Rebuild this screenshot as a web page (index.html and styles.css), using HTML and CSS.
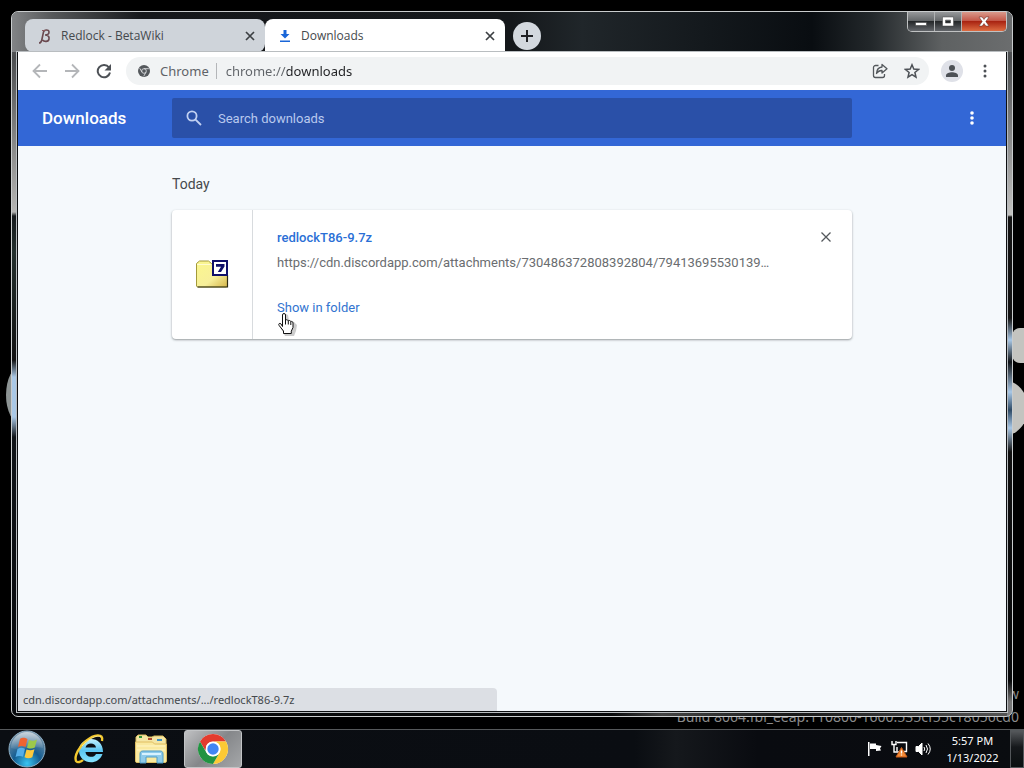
FILE: index.html
```html
<!DOCTYPE html>
<html lang="en">
<head>
    <meta charset="UTF-8">
    <meta name="viewport" content="width=device-width, initial-scale=1.0">
    <title>Downloads</title>
    <link rel="stylesheet" href="styles.css">
</head>
<body>
    <div class="desktop">
        <div class="blob blob-left"></div>
        <div class="blob blob-right-top"></div>
        <div class="blob blob-right-bottom"></div>
        <div class="watermark">
            <div>Windows Developer Preview</div>
            <div>Build 8064.fbl_eeap.110800-1600.535cf55c18056cd0</div>
        </div>

        <div class="window">
            <header class="titlebar">
                <div class="tabs">
                    <div class="tab">
                        <svg class="tab-icon" width="16" height="16" viewBox="0 0 16 16" fill="none" stroke="#6b4a50" stroke-width="1.6">
                            <path d="M2 15c2 0 2.500-1 3-4L6.500 4C7 1.500 12 1 12 4c0 2-2 3-4 3 3 0 4.500 1.500 4 4-.5 3-5 3-6.500 1"/>
                            <path d="M5 2.500h4" stroke="#8a5a60" stroke-width="1"/>
                        </svg>
                        <span class="tab-title">Redlock - BetaWiki</span>
                        <button class="tab-close" aria-label="Close tab">
                            <svg width="10" height="10" viewBox="0 0 10 10" stroke="#3c4043" stroke-width="1.7"><path d="M1 1l8 8M9 1L1 9"/></svg>
                        </button>
                    </div>
                    <div class="tab active">
                        <svg class="tab-icon" width="16" height="16" viewBox="0 0 16 16" fill="#1a66d8">
                            <path d="M6.500 2h3v4h3L8 10.500 3.500 6h3z"/>
                            <path d="M3 12.500h10V14H3z"/>
                        </svg>
                        <span class="tab-title">Downloads</span>
                        <button class="tab-close" aria-label="Close tab">
                            <svg width="10" height="10" viewBox="0 0 10 10" stroke="#3c4043" stroke-width="1.7"><path d="M1 1l8 8M9 1L1 9"/></svg>
                        </button>
                    </div>
                </div>
                <button class="new-tab" aria-label="New tab">
                    <svg width="12" height="12" viewBox="0 0 12 12" stroke="#202124" stroke-width="2"><path d="M6 0v12M0 6h12"/></svg>
                </button>
                <div class="captions">
                    <button class="caption" aria-label="Minimize">
                        <svg width="14" height="12" viewBox="0 0 14 12"><rect x="1.500" y="6.500" width="11" height="3" fill="#fff" stroke="#444" stroke-width=".6"/></svg>
                    </button>
                    <button class="caption" aria-label="Maximize">
                        <svg width="14" height="12" viewBox="0 0 14 12"><path d="M1.500 1h11v9h-11zM4.500 4v3h5V4z" fill="#fff" fill-rule="evenodd" stroke="#444" stroke-width=".5"/></svg>
                    </button>
                    <button class="caption close" aria-label="Close">
                        <svg width="14" height="12" viewBox="0 0 14 12"><path d="M2 1h3.200L7 3.500 8.800 1H12L8.800 5.500 12 10H8.800L7 7.500 5.200 10H2l3.200-4.500z" fill="#fff" stroke="#5a2520" stroke-width=".5"/></svg>
                    </button>
                </div>
            </header>

            <div class="client">
                <nav class="toolbar">
                    <button class="nav-btn" aria-label="Back">
                        <svg width="16" height="16" viewBox="0 0 16 16" fill="none" stroke="#b4b6b9" stroke-width="1.8"><path d="M15 8H2M8 1.500L1.500 8 8 14.500"/></svg>
                    </button>
                    <button class="nav-btn" aria-label="Forward">
                        <svg width="16" height="16" viewBox="0 0 16 16" fill="none" stroke="#b4b6b9" stroke-width="1.8"><path d="M1 8h13M8 1.500L14.500 8 8 14.500"/></svg>
                    </button>
                    <button class="nav-btn" aria-label="Reload">
                        <svg width="16" height="16" viewBox="0 0 16 16"><path d="M13 4.500A6.200 6.200 0 1 0 14 9.500" fill="none" stroke="#4d5156" stroke-width="2"/><path d="M15 1v6.500H8.500z" fill="#4d5156"/></svg>
                    </button>
                    <div class="omnibox">
                        <svg width="12" height="12" viewBox="0 0 14 14">
                            <circle cx="7" cy="7" r="7" fill="#54585c"/>
                            <circle cx="7" cy="7" r="2.700" fill="#54585c" stroke="#dfe1e4" stroke-width="1"/>
                            <path d="M7 4.300h5.600M4.700 8.400L2 3.800M9.300 8.400l-2.600 4.700" stroke="#dfe1e4" stroke-width="1"/>
                        </svg>
                        <span class="scheme">Chrome</span>
                        <input class="address" type="text" value="chrome://downloads" aria-label="Address">
                        <button class="omni-btn" aria-label="Share">
                            <svg width="16" height="16" viewBox="0 0 16 16" fill="none" stroke="#54585c" stroke-width="1.300" stroke-linejoin="round"><path d="M6.500 2.500H3.500a2 2 0 0 0-2 2v8a2 2 0 0 0 2 2h7a2 2 0 0 0 2-2V11"/><path d="M10 1.500L15 5.700 10 10V7.500C7.500 7.300 6 8.300 4.500 10.500 4.700 7 6.500 4.300 10 4z"/></svg>
                        </button>
                        <button class="omni-btn" aria-label="Bookmark">
                            <svg width="16" height="16" viewBox="0 0 16 16" fill="none" stroke="#4d5156" stroke-width="1.500"><path d="M8 1.800l1.800 4.300 4.700.4-3.600 3 1.100 4.600L8 11.700l-4 2.400 1.100-4.600-3.600-3 4.700-.4z"/></svg>
                        </button>
                    </div>
                    <button class="avatar" aria-label="Profile">
                        <svg width="14" height="14" viewBox="0 0 14 14" fill="#4d5156"><circle cx="7" cy="4" r="3"/><path d="M1 13v-1.500C1 9 4.500 8.200 7 8.200s6 .8 6 3.300V13z"/></svg>
                    </button>
                    <button class="menu-btn" aria-label="Chrome menu">
                        <svg width="4" height="14" viewBox="0 0 4 14" fill="#4d5156"><circle cx="2" cy="2" r="1.500"/><circle cx="2" cy="7" r="1.500"/><circle cx="2" cy="12" r="1.500"/></svg>
                    </button>
                </nav>

                <div class="page-header">
                    <h1>Downloads</h1>
                    <label class="search">
                        <svg width="16" height="16" viewBox="0 0 16 16" fill="none" stroke="#c2d1f2" stroke-width="1.800"><circle cx="6" cy="6" r="4.600"/><path d="M9.300 9.300l5.700 5.700"/></svg>
                        <input type="text" placeholder="Search downloads" aria-label="Search downloads">
                    </label>
                    <button class="more" aria-label="More actions">
                        <svg width="4" height="16" viewBox="0 0 4 16" fill="#fff"><circle cx="2" cy="3" r="1.800"/><circle cx="2" cy="8" r="1.800"/><circle cx="2" cy="13" r="1.800"/></svg>
                    </button>
                </div>

                <main class="downloads">
                    <h2>Today</h2>
                    <div class="card">
                        <div class="file-icon">
                            <svg width="34" height="30" viewBox="0 0 34 30">
                                <defs>
                                    <linearGradient id="folder" x1="0" y1="0" x2="1" y2="1">
                                        <stop offset="0" stop-color="#fbf78e"/>
                                        <stop offset=".6" stop-color="#f7ef9a"/>
                                        <stop offset="1" stop-color="#d5b54a"/>
                                    </linearGradient>
                                </defs>
                                <path d="M1.500 26V3.500l3-2.500h9l3 2.500h16V26l-1 1h-29z" fill="url(#folder)" stroke="#a39a3a"/>
                                <path d="M2.500 27h30V15" fill="none" stroke="#2d2a10" stroke-width="1.200"/>
                                <path d="M2 4.500h14" stroke="#fffcd0"/>
                                <rect x="18" y="1" width="14" height="14" fill="#fff" stroke="#10106a" stroke-width="2"/>
                                <path d="M21 4h8.500v2.500L26 12h-3.200L26 6.700h-5z" fill="#10106a"/>
                            </svg>
                        </div>
                        <div class="file-info">
                            <div class="file-row">
                                <a class="file-name" href="#">redlockT86-9.7z</a>
                                <button class="remove" aria-label="Remove from list">
                                    <svg width="10" height="10" viewBox="0 0 10 10" stroke="#54585c" stroke-width="1.300"><path d="M.5.5l9 9M9.500.5l-9 9"/></svg>
                                </button>
                            </div>
                            <div class="file-url">https://cdn.discordapp.com/attachments/730486372808392804/79413695530139…</div>
                            <div class="file-actions">
                                <a href="#">Show in folder</a>
                                <svg class="cursor" width="20" height="24" viewBox="0 0 20 24">
                                    <path d="M8 24l-2-4-4-6 2-1 3 1V3l2-1 2 1 1 5 5 2 3 3-1 6-2 5z" fill="#000" opacity=".2"/>
                                    <path d="M5.500 14.500V3a1.500 1.500 0 0 1 3 0v5.200c.5-.7 2.300-.7 2.700.6.700-.7 2.300-.4 2.500.8.900-.5 2.300 0 2.300 1.400v4.500l-1.700 3.700V21.500H6.500V19L2 13.300c-.9-1.300.6-2.600 1.900-1.500z" fill="#fff" stroke="#111"/>
                                    <path d="M8.500 8v4.500M11.300 9v3.500M13.800 10v3" stroke="#111"/>
                                </svg>
                            </div>
                        </div>
                    </div>
                </main>
                <div class="status">cdn.discordapp.com/attachments/.../redlockT86-9.7z</div>
            </div>
        </div>
    </div>

    <footer class="taskbar">
        <button class="start" aria-label="Start">
            <svg width="38" height="38" viewBox="0 0 38 38">
                <defs>
                    <radialGradient id="orb" cx=".5" cy=".9" r=".85">
                        <stop offset="0" stop-color="#39c5f2"/>
                        <stop offset=".45" stop-color="#155d91"/>
                        <stop offset="1" stop-color="#7893a8"/>
                    </radialGradient>
                    <linearGradient id="gloss" x1="0" y1="0" x2="0" y2="1">
                        <stop offset="0" stop-color="#fff" stop-opacity=".6"/>
                        <stop offset="1" stop-color="#fff" stop-opacity=".05"/>
                    </linearGradient>
                </defs>
                <circle cx="19" cy="19" r="18" fill="url(#orb)" stroke="#8fb0c6"/>
                <path d="M3 18a16 16 0 0 1 32 0c-10-3-22 4-32 0z" fill="url(#gloss)"/>
                <path d="M12 9c3-2 5-1 7.500 0l-2 8c-3-1.500-5-1.500-7.500 0z" fill="#ee6331"/>
                <path d="M21 10c3 1.200 5 1 8-.5l-2.200 8c-2.800 1.500-5 1.300-7.800.2z" fill="#9cc94b"/>
                <path d="M9.500 19c2.500-1.500 4.700-1.500 7.500-.3l-2 8c-3-1.200-5-1-7.500.3z" fill="#55aee8"/>
                <path d="M18.500 19.500c3 1.200 5 1 8-.3l-2.200 8c-2.800 1.300-5 1.200-7.800 0z" fill="#fcc93d"/>
            </svg>
        </button>
        <button class="task" aria-label="Internet Explorer">
            <svg width="32" height="32" viewBox="0 0 32 32" fill="none">
                <defs>
                    <linearGradient id="ie" x1="0" y1="0" x2="0" y2="1">
                        <stop offset="0" stop-color="#c2f1ff"/>
                        <stop offset=".5" stop-color="#5bc6f2"/>
                        <stop offset="1" stop-color="#87e4ff"/>
                    </linearGradient>
                </defs>
                <path d="M30 19H12.500c.3 5.500 8.500 6.500 10.500 2h6.500C25 34 5.500 31 6 17 6.500 3 30 1 30 19zm-7-4.500c-.5-5.500-9.500-5.500-10.500 0z" fill="url(#ie)" fill-rule="evenodd"/>
                <path d="M29 8C31 0 21 1 13 8 6 14 1 23 3 28c1 2 5 1 7-1" stroke="#f4c92f" stroke-width="2.400"/>
                <path d="M28 4C24 1 14 7 9 13" stroke="#fff0a0" stroke-width=".8"/>
            </svg>
        </button>
        <button class="task" aria-label="Windows Explorer">
            <svg width="34" height="32" viewBox="0 0 34 32">
                <path d="M2 4l2-2h8l2 2h4l2-1h9l3 3v8H2z" fill="#f5e6a4" stroke="#d9bb5e"/>
                <path d="M5 4h3" stroke="#31933b" stroke-width="2"/>
                <path d="M14 6h4" stroke="#b14a30" stroke-width="2"/>
                <path d="M23 7h5" stroke="#3e91c6" stroke-width="2"/>
                <path d="M1.500 9h17l2 2h12v17c0 1-.5 1.500-1.500 1.500H3c-1 0-1.500-.5-1.500-1.500z" fill="#fae99f" stroke="#e0bf62"/>
                <path d="M3 13h28M3 17h28" stroke="#fff6c8"/>
                <path d="M6 30V21c0-2 1-3 3-3h17c2 0 3 1 3 3v9h-6v-6H12v6z" fill="#8fcbea" stroke="#4d9bc8"/>
                <path d="M8 21h19" stroke="#d8f2ff" stroke-width="2"/>
            </svg>
        </button>
        <button class="task running" aria-label="Google Chrome">
            <svg width="32" height="32" viewBox="0 0 32 32">
                <circle cx="16" cy="16" r="15" fill="#fff"/>
                <path d="M3 8.500A15 15 0 0 1 29 8.500H16a7.500 7.500 0 0 0-6.500 3.800l-1 5.500z" fill="#e33b2e"/>
                <path d="M29 8.500A15 15 0 0 1 16 31l6.500-11.200A7.500 7.500 0 0 0 16 8.500z" fill="#fcc934"/>
                <path d="M16 31A15 15 0 0 1 3 8.500l6.500 11.300A7.500 7.500 0 0 0 22.500 19.800z" fill="#229342"/>
                <circle cx="16" cy="16" r="7.300" fill="#fff"/>
                <circle cx="16" cy="16" r="5.700" fill="#4285f4"/>
            </svg>
        </button>
        <div class="tray">
            <svg width="16" height="16" viewBox="0 0 16 16" fill="#fff"><path d="M1 1h1.500v14H1z"/><path d="M3 2.500h6v1.500l5.500 1L13 7.500l1 2-5 .5V8H3z"/></svg>
            <svg width="18" height="18" viewBox="0 0 18 18" fill="none" stroke="#fff">
                <path d="M2 1v3.500h4V1M4 4.500V12h5" stroke-width="1.400"/>
                <path d="M7 2.500h9.500v9H14M7 7v4.500" stroke-width="1.400"/>
                <path d="M11.500 7.500l5.500 9.500H6z" fill="#f38a35" stroke="#c85b19"/>
                <path d="M11.500 10.500v3M11.500 14.500v1" stroke-width="1.300"/>
            </svg>
            <svg width="16" height="16" viewBox="0 0 16 16" fill="none" stroke="#fff"><path d="M1 5.500h2.500L7 2v12l-3.500-3.500H1z" fill="#fff"/><path d="M9 6q1.500 2 0 4M11 4q3 4 0 8M13 2.500q4.500 5.500 0 11"/></svg>
        </div>
        <div class="clock">
            <div>5:57 PM</div>
            <div>1/13/2022</div>
        </div>
        <button class="show-desktop" aria-label="Show desktop"></button>
    </footer>
</body>
</html>
```
FILE: styles.css
```css
* {
    box-sizing: border-box;
}
body {
    margin: 0;
    display: flex;
    flex-direction: column;
    height: 100vh;
    background: #000;
    font-family: "Noto Sans", "Open Sans", sans-serif;
    font-size: 11px;
    overflow: hidden;
}
button {
    display: flex;
    align-items: center;
    justify-content: center;
    padding: 0;
    border: 0;
    background: none;
}
input {
    min-width: 0;
    padding: 0;
    border: 0;
    outline: 0;
    background: none;
}
svg {
    display: block;
    flex-shrink: 0;
}

/* desktop */
.desktop {
    position: relative;
    flex: 1;
    min-height: 0;
    display: flex;
    padding: 11px 11px 12px;
    overflow: hidden;
}
.blob {
    position: absolute;
    background: #c4c4c0;
}
.blob-left {
    left: 6px;
    top: 366px;
    width: 30px;
    height: 58px;
    border-radius: 50%;
    background: #8d9494;
}
.blob-right-top {
    right: -10px;
    top: 328px;
    width: 22px;
    height: 35px;
    border-radius: 8px;
}
.blob-right-bottom {
    right: -4px;
    top: 380px;
    width: 50px;
    height: 56px;
    border-radius: 50%;
}
.watermark {
    position: absolute;
    right: 5px;
    bottom: 1px;
    color: #8b8b8b;
    font-size: 14px;
    line-height: 23px;
    text-align: right;
    white-space: nowrap;
}

/* window with glass frame */
.window {
    position: relative;
    flex: 1;
    min-width: 0;
    display: flex;
    flex-direction: column;
    border: 1px solid #c9cccd;
    border-radius: 7px;
    overflow: hidden;
    background:
        linear-gradient(#75777a 0, #4c4e50 45px, #b5b5b3 200px, #161a1c 204px, #24302e 240px, #111 348px, #a9c8e6 365px, #a9c8e6 405px, #101418 425px, #05070a 100%) left / 5px 100% no-repeat,
        linear-gradient(#65676a 0, #4c4e50 45px, #c2c2c0 203px, #141414 205px, #141414 306px, #a9c8e6 328px, #101418 350px, #a9c8e6 380px, #2d4964 398px, #a9c8e6 416px, #111 440px, #08090a 95%, #777 98%) right / 5px 100% no-repeat,
        linear-gradient(90deg, #08090a 60%, #444 65%, #171717 78%, #555) bottom / 100% 5px no-repeat,
        #111416;
}
.titlebar {
    display: flex;
    height: 40px;
    padding: 0 5px 0 13px;
    background: linear-gradient(90deg, #828486 0, #56585a 40px, #16181b 130px, #14171a 500px, #20262a 570px, #090d11 800px, #23282b 860px, #5e6162 930px, #6b6d6e 100%);
}
.tabs {
    display: flex;
    align-self: flex-end;
}
.tab {
    display: flex;
    align-items: center;
    gap: 8px;
    width: 240px;
    height: 33px;
    padding: 0 10px 0 12px;
    border-radius: 8px;
    background: #cfd4da;
    color: #45494d;
    font-family: "Open Sans", sans-serif;
    font-size: 12px;
}
.tab.active {
    border-radius: 8px 8px 0 0;
    background: #fff;
}
.tab-title {
    flex: 1;
}
.tab-close {
    width: 10px;
    height: 16px;
}
.new-tab {
    width: 28px;
    height: 28px;
    margin: 10px 0 0 8px;
    border-radius: 50%;
    background: #d3d8de;
}
.captions {
    display: flex;
    align-self: flex-start;
    height: 20px;
    margin-left: auto;
    border: 1px solid #c0c2c3;
    border-top: 0;
    border-radius: 0 0 5px 5px;
    overflow: hidden;
}
.caption {
    width: 27px;
    border-right: 1px solid #b0b2b3;
    background: linear-gradient(#96989a, #66696b 45%, #25282a 50%, #63666a);
}
.caption.close {
    width: 44px;
    border-right: 0;
    background: linear-gradient(#d99a8c, #c4594a 45%, #a92412 50%, #dd6c42);
}
.client {
    position: relative;
    flex: 1;
    min-height: 0;
    display: flex;
    flex-direction: column;
    margin: 0 5px 4px;
    border: 1px solid #0c0e10;
    border-top: 0;
    box-shadow: 0 0 0 1px #b9bdc0;
    background: #f5f9fc;
}

/* toolbar */
.toolbar {
    display: flex;
    align-items: center;
    height: 38px;
    padding: 0 10px 0 6px;
    background: #fff;
}
.nav-btn {
    width: 32px;
    height: 32px;
}
.omnibox {
    flex: 1;
    display: flex;
    align-items: center;
    height: 28px;
    margin: 0 12px 0 6px;
    padding: 0 9px 0 12px;
    border-radius: 14px;
    background: #f1f3f4;
}
.scheme {
    margin-left: 10px;
    padding-right: 7px;
    border-right: 1px solid #b4b6b9;
    color: #5f6368;
    font-size: 13px;
    line-height: 16px;
}
.address {
    flex: 1;
    height: 24px;
    margin-left: 9px;
    background: linear-gradient(90deg, #5f6368 61px, #202124 61px) text;
    color: transparent;
    font: 13px "Noto Sans", sans-serif;
}
.omni-btn {
    width: 16px;
    height: 28px;
    margin-left: 16px;
}
.avatar {
    width: 22px;
    height: 22px;
    border-radius: 50%;
    background: #dfe1e8;
}
.menu-btn {
    width: 22px;
    height: 28px;
    margin-left: 11px;
}

/* downloads page */
.page-header {
    display: grid;
    grid-template-columns: 1fr minmax(0, 680px) 1fr;
    align-items: center;
    height: 56px;
    background: #3367d6;
    font-family: Roboto, sans-serif;
}
.page-header h1 {
    margin: 0;
    padding-left: 24px;
    color: #fff;
    font-size: 17px;
    font-weight: 500;
}
.search {
    display: flex;
    align-items: center;
    gap: 16px;
    height: 40px;
    padding: 0 14px;
    border-radius: 2px;
    background: #2a50a8;
}
.search input {
    flex: 1;
    color: #fff;
    font: 13px Roboto, sans-serif;
}
.search input::placeholder {
    color: #b9c9ee;
}
.more {
    justify-self: end;
    width: 20px;
    height: 32px;
    margin-right: 24px;
}
.downloads {
    flex: 1;
    width: 100%;
    max-width: 680px;
    margin: 0 auto;
    font-family: Roboto, sans-serif;
    font-size: 13px;
}
.downloads h2 {
    margin: 28px 0 16px;
    color: #45494d;
    font-size: 14px;
    font-weight: 400;
    line-height: 20px;
}
.card {
    display: flex;
    border-radius: 4px;
    background: #fff;
    box-shadow: 0 1px 2px rgba(60, 64, 67, 0.4), 0 1px 3px rgba(60, 64, 67, 0.15);
}
.file-icon {
    display: flex;
    align-items: center;
    justify-content: center;
    width: 81px;
    border-right: 1px solid #d8dbde;
}
.file-info {
    flex: 1;
    min-width: 0;
    padding: 16px 20px 20px 24px;
}
.file-row {
    display: flex;
    align-items: center;
    justify-content: space-between;
    height: 22px;
}
.file-info a {
    color: #3274d0;
    text-decoration: none;
}
.file-info .file-name {
    color: #2a6fd6;
    font-weight: 500;
}
.remove {
    width: 12px;
    height: 20px;
}
.file-url {
    margin-top: 4px;
    color: #6a6d70;
    line-height: 22px;
    white-space: nowrap;
}
.file-actions {
    position: relative;
    margin-top: 23px;
    line-height: 22px;
}
.cursor {
    position: absolute;
    left: 0;
    top: 15px;
}
.status {
    position: absolute;
    left: 0;
    bottom: 0;
    width: 479px;
    max-width: 100%;
    padding-left: 5px;
    border-radius: 0 4px 0 0;
    background: #dcdfe4;
    color: #45494d;
    line-height: 23px;
}

/* taskbar */
.taskbar {
    display: flex;
    align-items: center;
    height: 39px;
    padding-left: 8px;
    border-top: 1px solid #55585a;
    background: linear-gradient(90deg, #0b0e13, #0a0d12 62%, #15181c 66%, #090b10 74%, #0a0c10);
    color: #fff;
}
.start {
    width: 38px;
    height: 38px;
    margin-right: 14px;
}
.task {
    width: 58px;
    height: 38px;
    margin-right: 4px;
    border: 1px solid transparent;
    border-radius: 3px;
}
.task.running {
    border-color: #c2c4c6;
    background: linear-gradient(135deg, #c0c1c3, #85878a 50%, #a5a7a9);
}
.tray {
    display: flex;
    align-items: center;
    gap: 7px;
    margin-left: auto;
}
.clock {
    width: 79px;
    padding-left: 4px;
    line-height: 17px;
    text-align: center;
}
.show-desktop {
    width: 14px;
    height: 38px;
    border: 1px solid #53575a;
    background: linear-gradient(#55585b, #15181b 45%, #0a0f10);
}
```
